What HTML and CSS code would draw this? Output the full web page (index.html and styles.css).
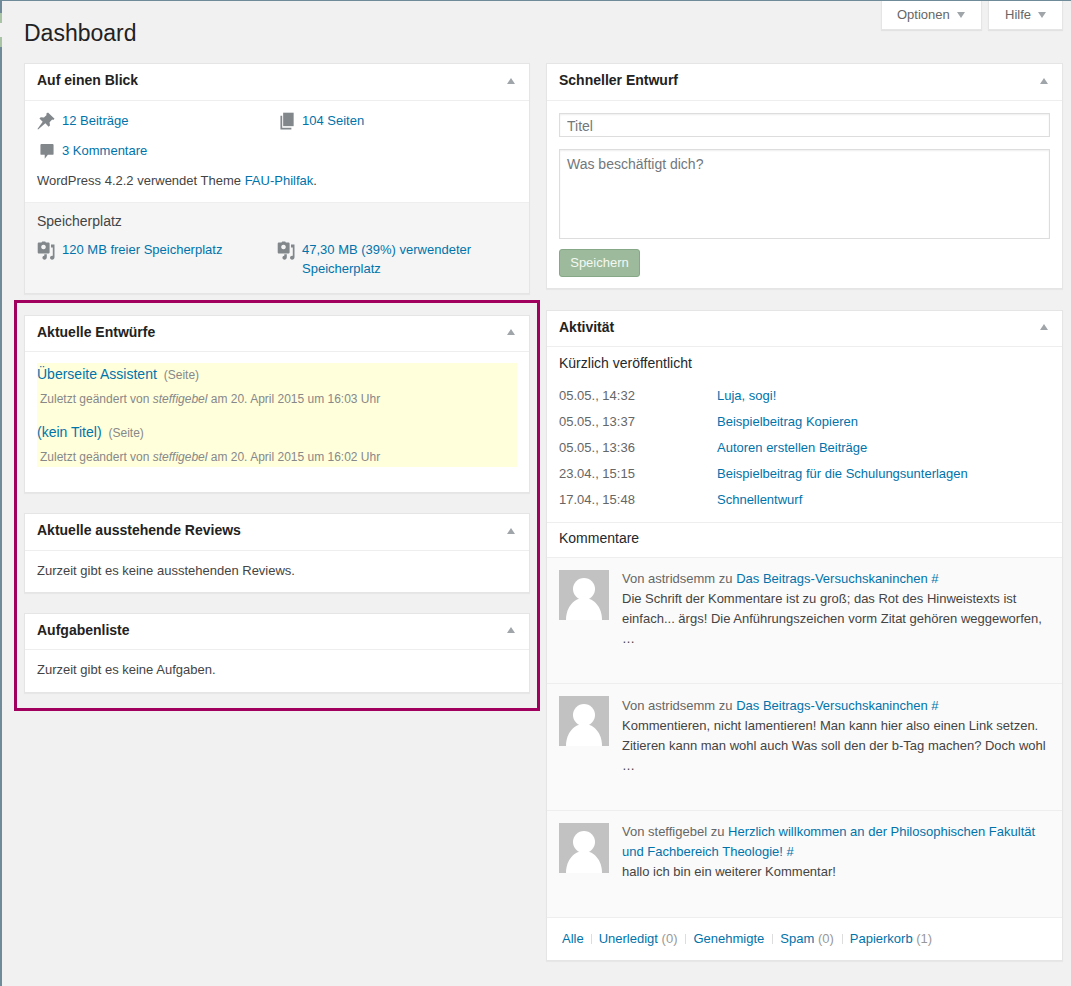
FILE: index.html
```html
<!DOCTYPE html>
<html lang="de">
<head>
	<meta charset="UTF-8">
	<title>Dashboard</title>
	<link rel="stylesheet" href="styles.css">
</head>
<body>
<svg class="defs" width="0" height="0">
	<symbol id="i-pin" viewBox="0 0 20 20"><path d="M12.2 0.500l7.300 7-1.500 1.400-1.100-.6-2.900 3 .4 3.600-1.500 1.400-3.600-3.700L1.200 19.500l-.7-.7 5.800-8L2.700 7.200l1.500-1.500 3.500.5 3-3-.5-1.200z"/></symbol>
	<symbol id="i-pages" viewBox="0 0 16 20"><path d="M3.600 0.500h12v15.400h-12z"/><path d="M0.500 4h2v13.800h10.500v1.900h-12.500z"/></symbol>
	<symbol id="i-comment" viewBox="0 0 16 18"><path d="M1.500 0.500h13c.6 0 1 .4 1 1v10.300c0 .6-.4 1-1 1h-5.500l-3.600 4.500v-4.500h-3.900c-.6 0-1-.4-1-1v-10.300c0-.6.4-1 1-1z"/></symbol>
	<symbol id="i-media" viewBox="0 0 18 19"><path fill-rule="evenodd" d="M2 1.500h2.500l.7-1h3l.7 1h2.400c.8 0 1.300.5 1.300 1.300v8.400c0 .8-.5 1.300-1.300 1.300h-9.300c-.8 0-1.300-.5-1.300-1.300v-8.400c0-.8.5-1.300 1.300-1.300zM6.500 3.700a2.300 2.300 0 1 0 .01 0z"/><path d="M14 3.500h3.500v12.800c0 1.400-1.100 2.400-2.400 2.400-1.200 0-2.100-.8-2.100-1.900 0-1.200 1-2.100 2.200-2.100.2 0 .4 0 .6.100v-8.400h-1.800z"/><path d="M7.300 13.300h2.500v3c0 1.400-1 2.400-2.300 2.400-1.200 0-2.100-.8-2.100-1.900 0-1.100 1-2 1.900-2z"/></symbol>
	<symbol id="i-avatar" viewBox="0 0 50 50"><circle cx="25" cy="19" r="11"/><path d="M7 50c0-13 8-22 18-22s18 9 18 22z"/></symbol>
</svg>

<div class="edge"><i class="edge-mark first"></i><i class="edge-gap"></i><i class="edge-mark second"></i></div>

<div class="screen-tabs">
	<a class="screen-tab">Optionen <span class="tri-down"></span></a>
	<a class="screen-tab help">Hilfe <span class="tri-down"></span></a>
</div>

<h1 class="page-title">Dashboard</h1>

<div class="columns">
	<div class="col-left">
		<section class="card glance">
			<header class="card-head"><h2>Auf einen Blick</h2><span class="tri-up"></span></header>
			<div class="glance-main">
				<ul class="glance-list">
					<li><svg class="ico pin"><use href="#i-pin"/></svg><a>12 Beiträge</a></li>
					<li><svg class="ico pages"><use href="#i-pages"/></svg><a>104 Seiten</a></li>
					<li><svg class="ico comment"><use href="#i-comment"/></svg><a>3 Kommentare</a></li>
				</ul>
				<p class="version">WordPress 4.2.2 verwendet Theme <a>FAU-Philfak</a>.</p>
			</div>
			<div class="storage">
				<h3>Speicherplatz</h3>
				<ul class="storage-list">
					<li><svg class="ico media"><use href="#i-media"/></svg><a>120 MB freier Speicherplatz</a></li>
					<li><svg class="ico media"><use href="#i-media"/></svg><a>47,30 MB (39%) verwendeter Speicherplatz</a></li>
				</ul>
			</div>
		</section>

		<div class="highlight-frame">
			<section class="card">
				<header class="card-head tight"><h2>Aktuelle Entwürfe</h2><span class="tri-up"></span></header>
				<div class="drafts-body">
					<div class="drafts">
						<div class="draft">
							<p class="draft-title"><a>Überseite Assistent</a> <span>(Seite)</span></p>
							<p class="draft-meta">Zuletzt geändert von <em>steffigebel</em> am 20. April 2015 um 16:03 Uhr</p>
						</div>
						<div class="draft">
							<p class="draft-title"><a>(kein Titel)</a> <span>(Seite)</span></p>
							<p class="draft-meta">Zuletzt geändert von <em>steffigebel</em> am 20. April 2015 um 16:02 Uhr</p>
						</div>
					</div>
				</div>
			</section>
			<section class="card">
				<header class="card-head"><h2>Aktuelle ausstehende Reviews</h2><span class="tri-up"></span></header>
				<p class="empty-note">Zurzeit gibt es keine ausstehenden Reviews.</p>
			</section>
			<section class="card">
				<header class="card-head tight"><h2>Aufgabenliste</h2><span class="tri-up"></span></header>
				<p class="empty-note">Zurzeit gibt es keine Aufgaben.</p>
			</section>
		</div>
	</div>

	<div class="col-right">
		<section class="card">
			<header class="card-head"><h2>Schneller Entwurf</h2><span class="tri-up"></span></header>
			<form class="quick-draft">
				<input class="qd-title" type="text" placeholder="Titel">
				<textarea class="qd-text" placeholder="Was beschäftigt dich?"></textarea>
				<button class="qd-save" type="button">Speichern</button>
			</form>
		</section>

		<section class="card">
			<header class="card-head tight"><h2>Aktivität</h2><span class="tri-up"></span></header>
			<h3 class="activity-label">Kürzlich veröffentlicht</h3>
			<ul class="recent">
				<li><span>05.05., 14:32</span><a>Luja, sogi!</a></li>
				<li><span>05.05., 13:37</span><a>Beispielbeitrag Kopieren</a></li>
				<li><span>05.05., 13:36</span><a>Autoren erstellen Beiträge</a></li>
				<li><span>23.04., 15:15</span><a>Beispielbeitrag für die Schulungsunterlagen</a></li>
				<li><span>17.04., 15:48</span><a>Schnellentwurf</a></li>
			</ul>
			<h3 class="activity-label comments-label">Kommentare</h3>
			<div class="comment-list">
				<div class="comment-item">
					<svg class="avatar"><use href="#i-avatar"/></svg>
					<div class="comment-text">
						<p class="by">Von astridsemm zu <a>Das Beitrags-Versuchskaninchen #</a></p>
						<p>Die Schrift der Kommentare ist zu groß; das Rot des Hinweistexts ist einfach... ärgs! Die Anführungszeichen vorm Zitat gehören weggeworfen, …</p>
					</div>
				</div>
				<div class="comment-item">
					<svg class="avatar"><use href="#i-avatar"/></svg>
					<div class="comment-text">
						<p class="by">Von astridsemm zu <a>Das Beitrags-Versuchskaninchen #</a></p>
						<p>Kommentieren, nicht lamentieren! Man kann hier also einen Link setzen. Zitieren kann man wohl auch Was soll den der b-Tag machen? Doch wohl …</p>
					</div>
				</div>
				<div class="comment-item last">
					<svg class="avatar"><use href="#i-avatar"/></svg>
					<div class="comment-text">
						<p class="by">Von steffigebel zu <a>Herzlich willkommen an der Philosophischen Fakultät und Fachbereich Theologie! #</a></p>
						<p>hallo ich bin ein weiterer Kommentar!</p>
					</div>
				</div>
			</div>
			<ul class="subsubsub">
				<li><a>Alle</a></li>
				<li><a>Unerledigt</a> <span>(0)</span></li>
				<li><a>Genehmigte</a></li>
				<li><a>Spam</a> <span>(0)</span></li>
				<li><a>Papierkorb</a> <span>(1)</span></li>
			</ul>
		</section>
	</div>
</div>
</body>
</html>
```

FILE: styles.css
```css
* {
	box-sizing: border-box;
}
html, body {
	margin: 0;
	height: 986px;
	overflow: hidden;
}
body {
	background: #f1f1f1;
	color: #444;
	font-family: "Liberation Sans", Arial, sans-serif;
	font-size: 13px;
	line-height: 20px;
	border-top: 1px solid #6f8b99;
	position: relative;
}
h1, h2, h3, p, ul {
	margin: 0;
	padding: 0;
	font-weight: normal;
}
ul {
	list-style: none;
}
a {
	color: #0073aa;
}
.defs {
	position: absolute;
}

/* strip of the admin menu that is left in the crop */
.edge {
	position: absolute;
	left: 0;
	top: 0;
	width: 2px;
	height: 985px;
	background: #6f8b99;
}
.edge-mark, .edge-gap {
	position: absolute;
	left: 0;
	width: 2px;
	background: #a9c4a4;
}
.edge-mark.first {
	top: 12px;
	height: 10px;
}
.edge-gap {
	top: 22px;
	height: 14px;
	background: #f1f1f1;
}
.edge-mark.second {
	top: 36px;
	height: 10px;
}

.screen-tabs {
	position: absolute;
	top: 0;
	right: 8px;
	display: flex;
	gap: 6px;
}
.screen-tab {
	display: flex;
	align-items: center;
	height: 29px;
	width: 101px;
	padding: 0 0 1px 15px;
	background: #fff;
	color: #666;
	border: 1px solid #e5e5e5;
	border-top: 0;
	box-shadow: 0 1px 1px rgba(0,0,0,.06);
}
.screen-tab.help {
	width: 75px;
	padding-left: 16px;
}
.tri-down {
	width: 0;
	height: 0;
	margin-left: 7px;
	border-left: 4px solid transparent;
	border-right: 4px solid transparent;
	border-top: 6px solid #a0a5aa;
}
.tri-up {
	width: 0;
	height: 0;
	margin-bottom: 2px;
	border-left: 4px solid transparent;
	border-right: 4px solid transparent;
	border-bottom: 6px solid #a0a5aa;
}

.page-title {
	margin-left: 24px;
	padding-top: 17px;
	height: 62px;
	font-size: 23px;
	line-height: 30px;
	color: #222;
}

.columns {
	display: flex;
	align-items: flex-start;
	padding-left: 14px;
	gap: 6px;
}
.col-left {
	width: 526px;
	display: flex;
	flex-direction: column;
}
.col-right {
	width: 517px;
	display: flex;
	flex-direction: column;
	gap: 21px;
}
.card {
	background: #fff;
	border: 1px solid #e5e5e5;
	box-shadow: 0 1px 1px rgba(0,0,0,.04);
}
.card-head {
	display: flex;
	align-items: center;
	justify-content: space-between;
	height: 37px;
	padding: 0 14px 0 12px;
	border-bottom: 1px solid #eee;
}
.card-head.tight {
	height: 36px;
}
.card-head.tight .tri-up {
	margin-bottom: 3px;
}
.card-head h2 {
	font-size: 14px;
	font-weight: bold;
	line-height: 20px;
	padding-bottom: 4px;
	color: #222;
}

/* Auf einen Blick */
.glance {
	margin: 0 10px 6px;
}
.glance-main {
	padding: 10px 12px 11px;
}
.glance-list {
	display: flex;
	flex-wrap: wrap;
	row-gap: 10px;
}
.glance-list li, .storage-list li {
	width: 50%;
	display: flex;
	align-items: flex-start;
	gap: 7px;
}
.glance-list li:nth-child(2), .storage-list li:nth-child(2) {
	padding-right: 40px;
}
.ico {
	flex: none;
	fill: #82878c;
}
.ico.pin {
	width: 18px;
	height: 18px;
	margin-top: 1px;
}
.ico.pages {
	width: 14px;
	height: 18px;
	margin: 1px 1px 0 3px;
}
.ico.comment {
	width: 14px;
	height: 17px;
	margin: 2px 1px 0 3px;
}
.ico.media {
	width: 18px;
	height: 19px;
	margin-top: 1px;
}
.version {
	margin-top: 10px;
	color: #444;
}
.storage {
	height: 91px;
	padding: 8px 12px 0;
	background: #f5f5f5;
	border-top: 1px solid #eee;
}
.storage h3 {
	font-size: 14px;
	line-height: 20px;
	color: #444;
}
.storage-list {
	display: flex;
	margin-top: 9px;
	line-height: 19px;
}

/* purple frame around the moved boxes */
.highlight-frame {
	height: 411px;
	border: 3px solid #a2005e;
	padding: 12px 7px 0;
	display: flex;
	flex-direction: column;
	gap: 20px;
}
.drafts-body {
	padding: 11px 12px 25px;
}
.drafts {
	height: 104px;
	padding-top: 1px;
	background: #ffffdc;
}
.draft {
	height: 58px;
}
.draft-title {
	font-size: 14px;
	line-height: 20px;
}
.draft-title span {
	margin-left: 3px;
	font-size: 12px;
	color: #888;
}
.draft-meta {
	margin-top: 4px;
	padding-left: 3px;
	font-size: 12px;
	color: #888;
}
.empty-note {
	padding: 10px 12px 0;
	height: 41px;
}
.card-head.tight + .empty-note {
	height: 42px;
}

/* Schneller Entwurf */
.quick-draft {
	padding: 12px 12px 11px;
	display: flex;
	flex-direction: column;
	align-items: flex-start;
}
.qd-title, .qd-text {
	display: block;
	width: 100%;
	border: 1px solid #ddd;
	background: #fff;
	box-shadow: inset 0 1px 2px rgba(0,0,0,.07);
	font-family: "Liberation Sans", Arial, sans-serif;
	font-size: 14px;
	color: #444;
	padding: 0 7px;
	outline: 0;
	resize: none;
}
.qd-title {
	height: 24px;
	padding-top: 2px;
}
.qd-text {
	height: 90px;
	margin-top: 12px;
	padding-top: 4px;
	line-height: 20px;
}
.qd-title::placeholder, .qd-text::placeholder {
	color: #72777c;
	opacity: 1;
}
.qd-save {
	width: 81px;
	height: 28px;
	margin-top: 10px;
	padding: 0 0 2px;
	background: #9dbb9c;
	border: 1px solid #86a886;
	border-radius: 3px;
	color: #f4f8f2;
	font-family: "Liberation Sans", Arial, sans-serif;
	font-size: 13px;
	font-weight: normal;
}

/* Aktivität */
.activity-label {
	padding: 0 12px;
	height: 36px;
	line-height: 33px;
	font-size: 14px;
	color: #23282d;
}
.recent {
	padding: 0 12px 9px;
	border-bottom: 1px solid #eee;
}
.recent li {
	display: flex;
	height: 26px;
	line-height: 26px;
}
.recent span {
	width: 158px;
	color: #666;
}
.comments-label {
	height: 34px;
	line-height: 31px;
}
.comment-list {
	background: #fafafa;
	border-top: 1px solid #eee;
}
.comment-item {
	display: flex;
	gap: 13px;
	height: 126px;
	padding: 12px 12px 0;
	border-bottom: 1px solid #eee;
}
.comment-item:nth-child(2) {
	height: 127px;
}
.comment-item.last {
	height: 107px;
}
.avatar {
	flex: none;
	width: 50px;
	height: 50px;
	background: #c2c2c2;
	fill: #fff;
}
.comment-text {
	margin-top: -1px;
	color: #444;
}
.comment-item:nth-child(2) .comment-text {
	margin-top: 0;
}
.comment-text .by {
	color: #666;
}
.subsubsub {
	display: flex;
	height: 42px;
	padding: 11px 0 0 15px;
}
.subsubsub li + li {
	margin-left: 7px;
	padding-left: 8px;
	position: relative;
}
.subsubsub li:nth-child(n+3) {
	margin-left: 8px;
}
.subsubsub li + li::before {
	content: "";
	position: absolute;
	left: 0;
	top: 5px;
	height: 10px;
	border-left: 1px solid #ddd;
}
.subsubsub span {
	color: #999;
}
```
